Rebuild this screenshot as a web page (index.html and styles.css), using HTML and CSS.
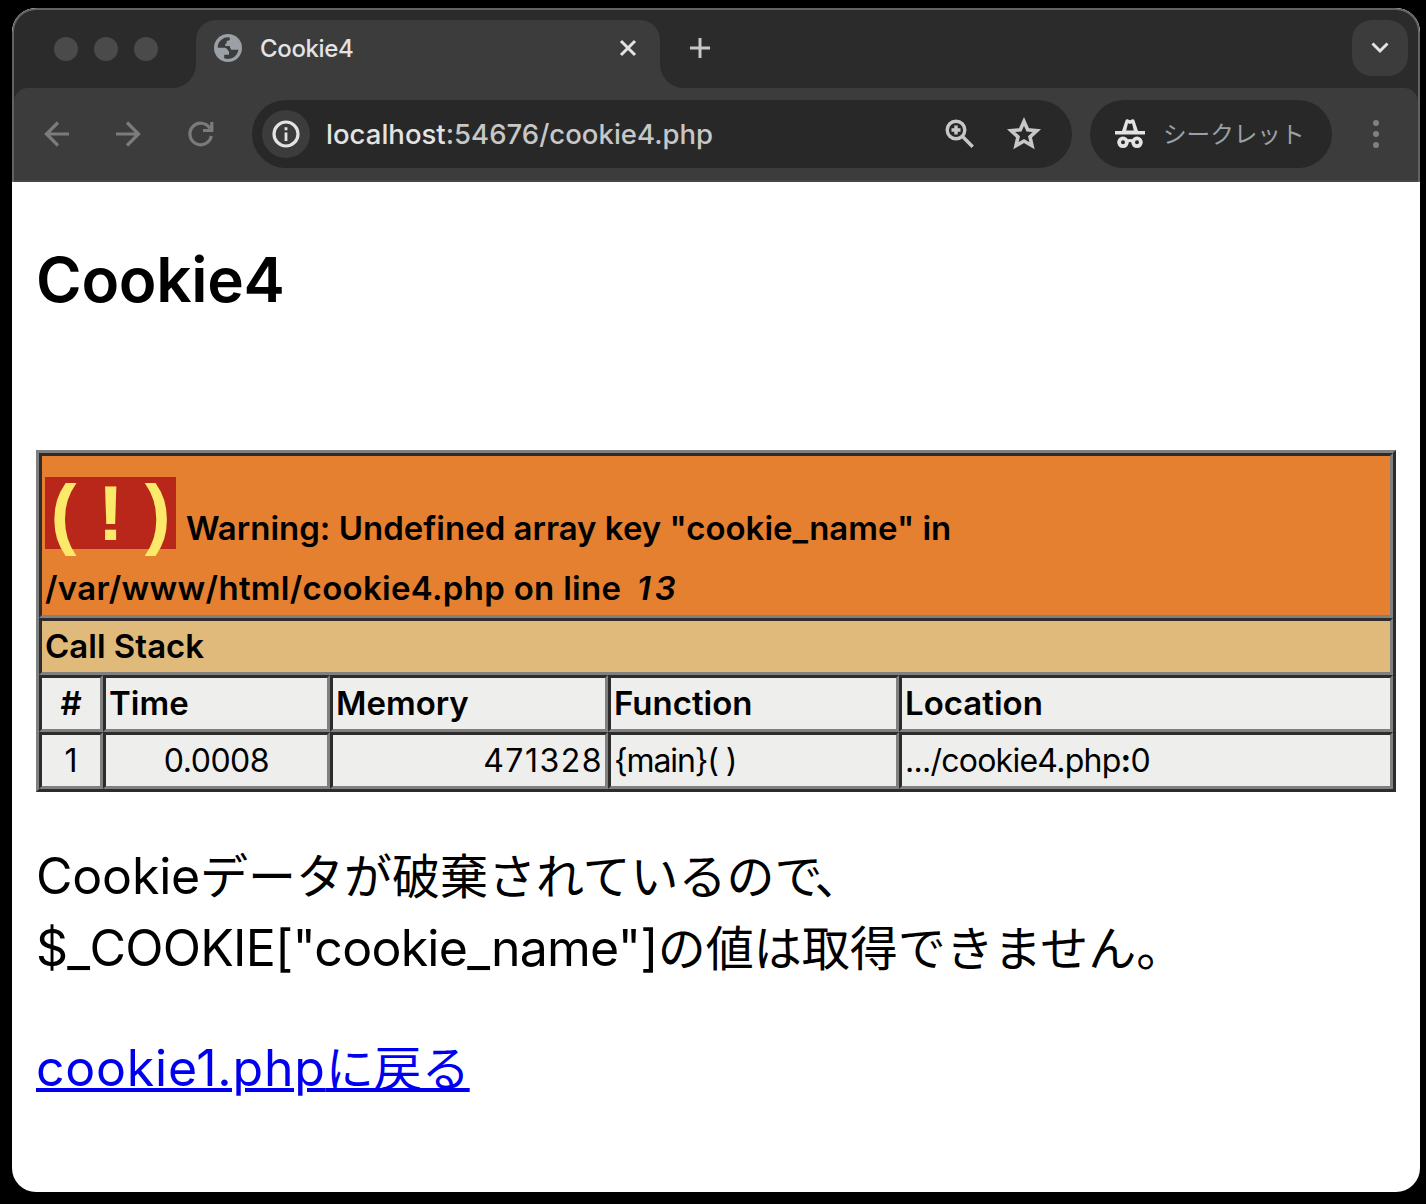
FILE: index.html
```html
<!DOCTYPE html>
<html lang="ja">
<head>
<meta charset="utf-8">
<title>Cookie4</title>
<link rel="stylesheet" href="styles.css">
</head>
<body>
<div class="window">
  <div class="chrome">
    <div class="tabstrip">
      <div class="lights"><i></i><i></i><i></i></div>
      <div class="tab">
        <svg class="globe" viewBox="0 0 28 28"><circle cx="14" cy="14" r="14" fill="#9aa0a6"/><path fill="#3c3c3c" d="M3.6 13.7A10.5 10.5 0 0 1 15.8 3.5V6L12.6 7.2V9.3L11.2 10.2V12H16V14.5H17V15.8H24.4A10.5 10.5 0 0 1 10.2 24.2V20.8H15V17.5L12.6 14.6L11 13.7Z"/></svg>
        <span class="tab-title latin">Cookie4</span>
        <svg class="close" viewBox="0 0 16 16"><path d="M1 1L15 15M15 1L1 15" stroke="#e3e3e3" stroke-width="3"/></svg>
      </div>
      <svg class="plus" viewBox="0 0 20 20"><path d="M10 0V20M0 10H20" stroke="#c7c7c7" stroke-width="3"/></svg>
      <div class="tabsearch"><svg viewBox="0 0 18 12"><path d="M1.5 1.5L9 9L16.5 1.5" fill="none" stroke="#e3e3e3" stroke-width="3"/></svg></div>
    </div>
    <div class="toolbar">
      <svg class="nav back" viewBox="0 0 26 26"><path d="M25 13H3M14 1.5L2.5 13L14 24.5" fill="none" stroke="#7b7b7b" stroke-width="3.2"/></svg>
      <svg class="nav forward" viewBox="0 0 26 26"><path d="M1 13H23M12 1.5L23.5 13L12 24.5" fill="none" stroke="#7b7b7b" stroke-width="3.2"/></svg>
      <svg class="nav reload" viewBox="0 0 26 26"><path d="M23.3 15A10.8 10.8 0 1 1 22 7.5M23.8 1V9.5H15" fill="none" stroke="#7b7b7b" stroke-width="3.2"/></svg>
      <div class="omnibox">
        <div class="info"><svg viewBox="0 0 28 28"><circle cx="14" cy="14" r="12" fill="none" stroke="#e3e3e3" stroke-width="3.2"/><path d="M14 12.5V21M14 7.3V10.2" stroke="#e3e3e3" stroke-width="2.8"/></svg></div>
        <span class="url latin"><b>localhost</b>:54676/cookie4.php</span>
        <svg class="magnify" viewBox="0 0 30 30"><circle cx="11" cy="11" r="8.8" fill="none" stroke="#c7c7c7" stroke-width="3.4"/><path d="M17.5 17.5L27.7 27.7M11 6.5V15.5M6.5 11H15.5" stroke="#c7c7c7" stroke-width="3.4"/></svg>
        <svg class="star" viewBox="0 0 34 34"><path d="M17 4.5L20.7 12.8L29.8 13.7L23 19.8L25 28.7L17 24L9 28.7L11 19.8L4.2 13.7L13.3 12.8Z" fill="none" stroke="#c7c7c7" stroke-width="3.6"/></svg>
      </div>
      <div class="incognito">
        <svg viewBox="0 0 30 30"><path d="M0 12H7L10.5 1.5Q11 0 12.5 .3L15 1.2L17.5 .3Q19 0 19.5 1.5L23 12H30V15.5H0Z" fill="#e3e3e3"/><path d="M13 4.2L15 5L17 4.2L18.8 11.4H11.2Z" fill="#282828"/><g fill="none" stroke="#e3e3e3" stroke-width="3.8"><circle cx="8" cy="23.3" r="3.9"/><circle cx="22" cy="23.3" r="3.9"/><path d="M11.5 22.5Q15 20.5 18.5 22.5" stroke-width="3"/></g></svg>
        <span class="incognito-label">シークレット</span>
      </div>
      <svg class="menu" viewBox="0 0 6 28"><g fill="#808080"><circle cx="3" cy="3" r="3"/><circle cx="3" cy="14" r="3"/><circle cx="3" cy="25" r="3"/></g></svg>
    </div>
  </div>
  <main class="page">
    <h1 class="heading latin">Cookie4</h1>
    <table class="xdebug">
      <colgroup><col class="c1"><col class="c2"><col class="c3"><col class="c4"><col class="c5"></colgroup>
      <tr class="warning"><th colspan="5"><div class="warning-text"><span class="bang">( ! )</span>Warning: Undefined array key "cookie_name" in<br><span class="path">/var/www/html/cookie4.php on line</span> <i class="line-no">13</i></div></th></tr>
      <tr class="stack"><th colspan="5">Call Stack</th></tr>
      <tr><th class="center">#</th><th>Time</th><th>Memory</th><th>Function</th><th>Location</th></tr>
      <tr><td class="center">1</td><td class="center time">0.0008</td><td class="right"><span class="memory">471328</span></td><td class="function">{main}( )</td><td class="location">.../cookie4.php<b>:</b>0</td></tr>
    </table>
    <p class="message"><span class="latin word">Cookie</span>データが破棄されているの<span class="tight">で</span>、<br><span class="latin variable">$_COOKIE["cookie_name"]</span>の値は取得できません。</p>
    <p class="back-link"><a href="#"><span class="latin file">cookie1.php</span>に戻る</a></p>
  </main>
</div>
</body>
</html>
```
FILE: styles.css
```css
* { box-sizing: border-box; }
body { margin: 0; padding: 8px 6px 12px 12px; height: 1204px; background: #000; font-family: Inter, "Noto Sans CJK JP", sans-serif; }
svg { display: block; flex: none; overflow: visible; }
.latin { font-family: Inter, sans-serif; }

.window { width: 1408px; height: 1184px; background: #fff; border-radius: 24px; overflow: hidden; }
.chrome { height: 174px; background: #2b2b2b; border: 2px solid #626262; border-bottom: 0; border-radius: 24px 24px 0 0; overflow: hidden; }
.tabstrip { display: flex; height: 78px; padding: 10px 10px 0 40px; }
.lights { display: flex; gap: 16px; padding-top: 17px; width: 142px; }
.lights i { width: 24px; height: 24px; border-radius: 50%; background: #4a4a4a; }
.tab { position: relative; display: flex; align-items: center; width: 464px; height: 68px; padding: 0 24px 12px 18px; background: #3c3c3c; border-radius: 20px 20px 0 0; }
.tab::before, .tab::after { content: ""; position: absolute; bottom: 0; width: 24px; height: 24px; }
.tab::before { right: 100%; background: radial-gradient(circle at 0 0, transparent 23.5px, #3c3c3c 24.5px); }
.tab::after { left: 100%; background: radial-gradient(circle at 100% 0, transparent 23.5px, #3c3c3c 24.5px); }
.globe { width: 28px; height: 28px; }
.tab-title { flex: 1; margin-left: 18px; font-size: 24px; font-weight: 450; letter-spacing: -0.35px; color: #e3e3e3; }
.close { width: 16px; height: 16px; }
.plus { width: 20px; height: 20px; margin: 18px 0 0 30px; }
.tabsearch { display: flex; align-items: center; justify-content: center; width: 56px; height: 56px; margin-left: auto; border-radius: 20px; background: #3c3c3c; }
.tabsearch svg { width: 18px; height: 12px; }

.toolbar { display: flex; align-items: center; height: 94px; padding: 0 39px 0 30px; background: #3c3c3c; border-bottom: 2px solid #474747; border-radius: 14px 14px 0 0; }
.nav { width: 26px; height: 26px; }
.forward { margin-left: 45px; }
.reload { margin-left: 47px; }
.omnibox { display: flex; align-items: center; width: 820px; height: 68px; margin-left: 38px; padding: 0 31px 0 10px; border-radius: 34px; background: #282828; }
.info { display: flex; align-items: center; justify-content: center; width: 48px; height: 48px; border-radius: 50%; background: #3c3c3c; }
.info svg { width: 28px; height: 28px; }
.url { flex: 1; margin-left: 16px; font-size: 27.5px; font-weight: 450; letter-spacing: 0.02px; color: #c7c7c7; white-space: nowrap; }
.url b { font-weight: 450; color: #e3e3e3; }
.magnify { width: 30px; height: 30px; }
.star { width: 34px; height: 34px; margin-left: 32px; }
.incognito { display: flex; align-items: center; width: 242px; height: 68px; margin-left: 18px; padding-left: 25px; border-radius: 34px; background: #282828; }
.incognito svg { width: 30px; height: 30px; }
.incognito-label { margin: 0 0 2px 18px; font: 23.6px "Noto Sans CJK JP", sans-serif; color: #9aa0a6; white-space: nowrap; }
.menu { width: 6px; height: 28px; margin-left: auto; }

.page { padding: 48px 24px 0; color: #000; }
.heading { margin: 0; height: 220px; font-size: 62px; line-height: 100px; font-weight: 600; letter-spacing: -0.3px; }
.xdebug { width: 1360px; table-layout: fixed; border-collapse: separate; border-spacing: 0; border: 3px solid; border-color: #808080 #2c2c2c #2c2c2c #808080; font-size: 33px; line-height: 48px; }
.c1 { width: 64px; } .c2 { width: 227px; } .c3 { width: 278px; } .c4 { width: 291px; } .c5 { width: 494px; }
.xdebug th, .xdebug td { height: 57px; padding: 0 3px 2px; border: 3px solid; border-color: #2c2c2c #808080 #808080 #2c2c2c; background: #eeeeec; text-align: left; vertical-align: middle; white-space: nowrap; }
.xdebug th { font-weight: 600; }
.xdebug td { padding-bottom: 0; font-size: 32px; }
.xdebug .center { text-align: center; }
.xdebug .right { text-align: right; }
.xdebug .time { letter-spacing: -0.45px; }
.xdebug .function { letter-spacing: -1.1px; }
.xdebug .location { letter-spacing: -0.75px; }
.memory { margin-right: -1px; letter-spacing: 1.5px; }
.xdebug .warning th { height: 165px; padding-bottom: 0; line-height: 60px; background: #e48030; vertical-align: bottom; }
.warning-text { margin-bottom: -3px; }
.path { letter-spacing: 0.3px; }
.line-no { margin-left: 7px; letter-spacing: 4px; }
.xdebug .stack th { background: #e0ba7a; }
.bang { display: inline-block; width: 131px; height: 72px; margin-right: 10px; background: #b9271b; color: #fbe96a; font: bold 78px/72px "Liberation Sans", sans-serif; letter-spacing: -0.3px; text-align: center; }
.message { margin: 45px 0 0; font: 48px/72px "Noto Sans CJK JP", sans-serif; }
.message .latin, .back-link .latin { font-size: 50px; line-height: 1; }
.message .word { letter-spacing: -0.2px; }
.message .variable { letter-spacing: -0.74px; }
.tight { letter-spacing: -8px; }
.back-link { margin: 48px 0 0; font: 48px/72px "Noto Sans CJK JP", sans-serif; }
.back-link .file { letter-spacing: 0.78px; }
.back-link a { color: #0000ee; text-decoration-thickness: 4px; }
```
